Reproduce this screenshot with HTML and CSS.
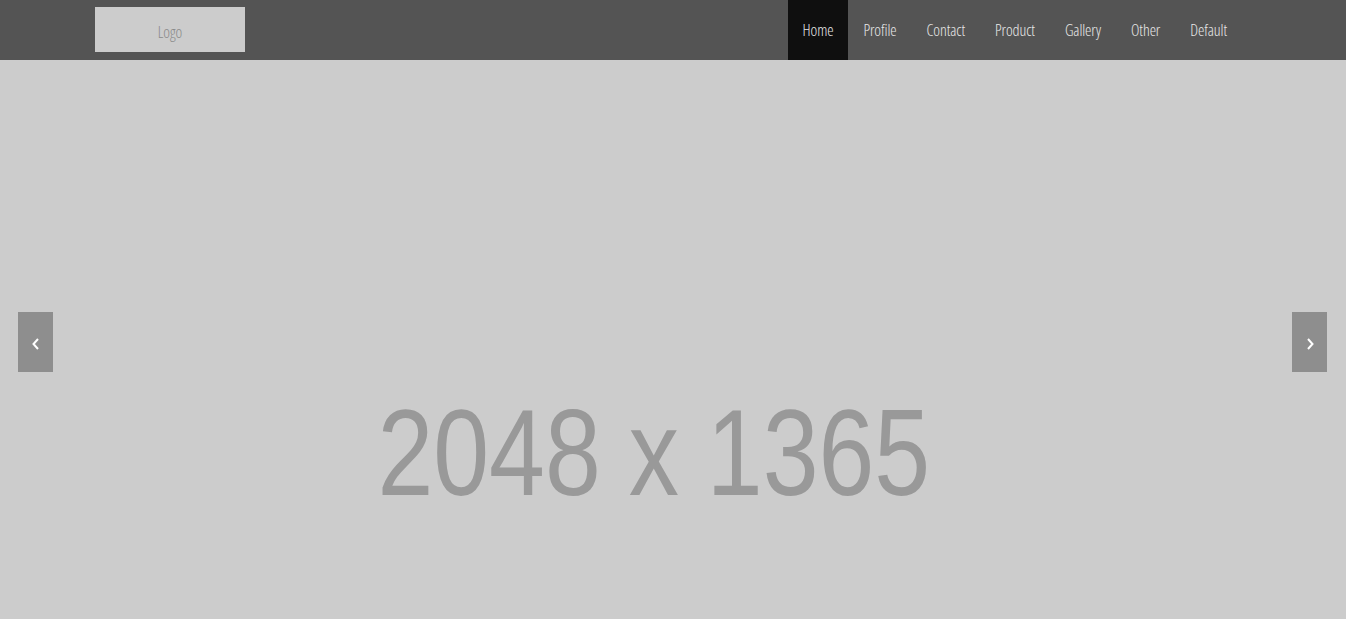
FILE: index.html
```html
<!DOCTYPE html>
<html>
<head>
<meta charset="utf-8">
<link rel="stylesheet" href="styles.css">
</head>
<body>
<header class="topbar">
  <div class="logo"><span class="logo-text">Logo</span></div>
  <nav class="nav">
    <a class="nav-item active" href="#">Home</a>
    <a class="nav-item" href="#">Profile</a>
    <a class="nav-item" href="#">Contact</a>
    <a class="nav-item" href="#">Product</a>
    <a class="nav-item" href="#">Gallery</a>
    <a class="nav-item" href="#">Other</a>
    <a class="nav-item" href="#">Default</a>
  </nav>
</header>
<section class="slider">
  <div class="slide-text">2048 x 1365</div>
  <button class="arrow arrow-left" aria-label="Previous">
    <svg width="10" height="14" viewBox="0 0 10 14"><path d="M7 2 L2.5 7 L7 12" fill="none" stroke="#fff" stroke-width="2"/></svg>
  </button>
  <button class="arrow arrow-right" aria-label="Next">
    <svg width="10" height="14" viewBox="0 0 10 14"><path d="M3 2 L7.5 7 L3 12" fill="none" stroke="#fff" stroke-width="2"/></svg>
  </button>
</section>
</body>
</html>
```
FILE: styles.css
```css
html, body {
  margin: 0;
  padding: 0;
  height: 100%;
  overflow: hidden;
}
body {
  font-family: "Open Sans", sans-serif;
  background: #ccc;
}
.topbar {
  height: 60px;
  background: #545454;
  display: flex;
  align-items: flex-start;
  justify-content: space-between;
  padding: 0 104px 0 95px;
}
.logo {
  margin-top: 7px;
  width: 150px;
  height: 45px;
  background: #cccccc;
  display: flex;
  align-items: center;
  justify-content: center;
}
.logo-text {
  font-size: 16px;
  font-weight: 300;
  font-stretch: 75%;
  color: #8a8a8a;
  padding-top: 5px;
}
.nav {
  display: flex;
  height: 60px;
}
.nav-item {
  display: flex;
  align-items: center;
  height: 60px;
  padding: 0 15px;
  box-sizing: border-box;
  color: #e8e8e8;
  text-decoration: none;
  font-size: 16px;
  font-weight: 300;
  font-stretch: 75%;
  letter-spacing: -0.08px;
}
.nav-item.active {
  background: #0f0f0f;
}
.slider {
  position: relative;
  height: 559px;
  background: #cccccc;
  display: flex;
  justify-content: center;
}
.slide-text {
  font-family: "Liberation Sans", sans-serif;
  font-size: 122px;
  line-height: 1;
  color: #999999;
  margin-top: 332px;
  height: 122px;
  white-space: nowrap;
  transform: translateX(-19px) scaleX(0.823);
}
.arrow {
  position: absolute;
  top: 252px;
  width: 35px;
  height: 60px;
  background: #8e8e8e;
  border: 0;
  padding: 0;
  display: flex;
  align-items: center;
  justify-content: center;
}
.arrow svg {
  display: block;
  margin-top: 4px;
}
.arrow-left {
  left: 18px;
}
.arrow-right {
  right: 19px;
}
```
